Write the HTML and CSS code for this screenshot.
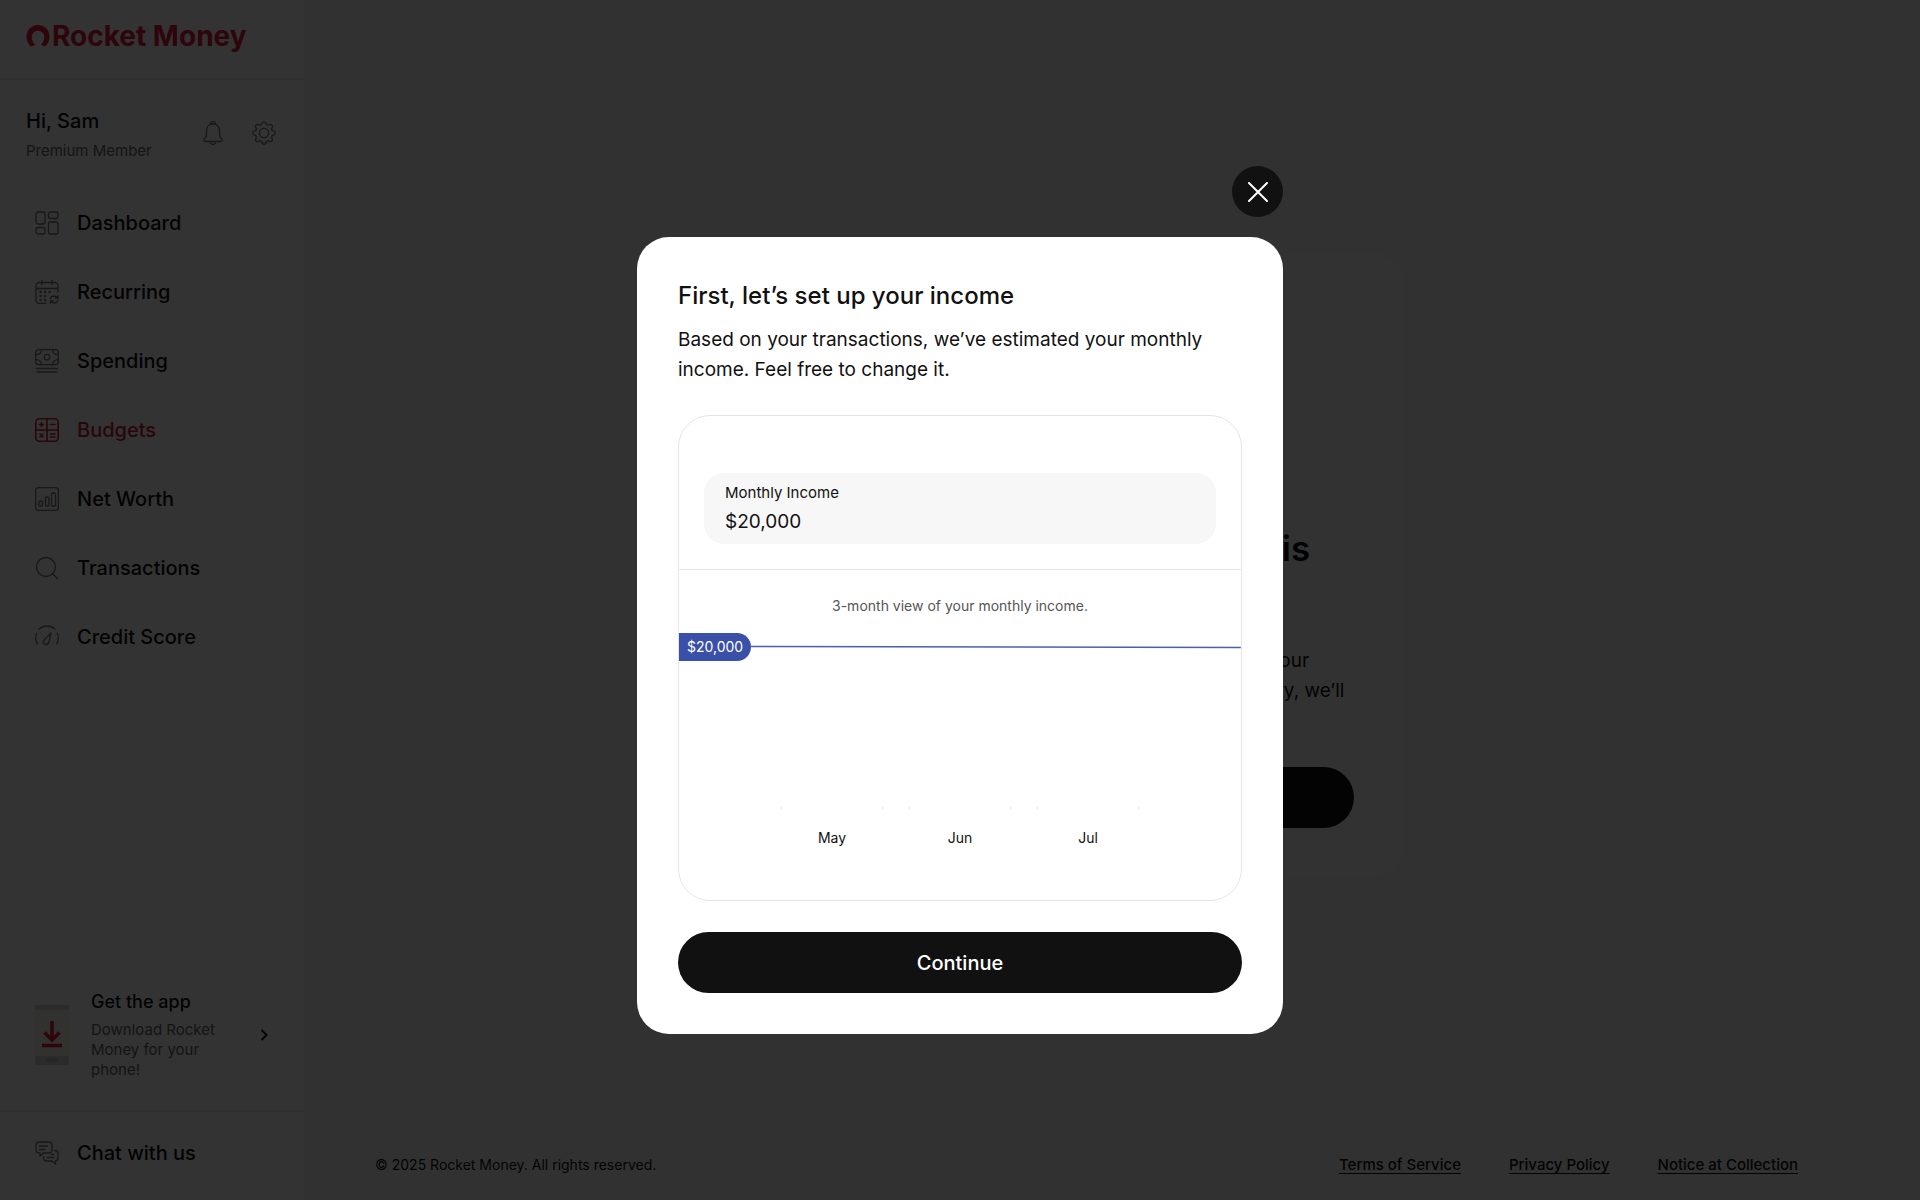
FILE: index.html
```html
<!DOCTYPE html>
<html lang="en">
<head>
<meta charset="utf-8">
<meta name="viewport" content="width=device-width, initial-scale=1">
<title>Rocket Money</title>
<link rel="stylesheet" href="styles.css">
</head>
<body>
<div class="app">
  <aside class="sidebar">
    <div class="brand">
      <svg class="brand-mark" viewBox="0 0 24 24" aria-hidden="true"><path d="M5 22.500C1.800 20.500 0 16.500 0 12a12 12 0 0 1 24 0c0 4.500-1.800 8.500-5 10.500l-4-2c2.600-2.200 3.500-5.200 3.500-8a6.500 6.500 0 0 0-13 0c0 2.800 1.200 5.600 3.500 8z"/></svg>
      <span class="brand-name">Rocket Money</span>
    </div>
    <div class="profile">
      <div class="profile-text">
        <p class="greeting">Hi, Sam</p>
        <p class="member">Premium Member</p>
      </div>
      <button class="icon-button" type="button" aria-label="Notifications">
        <svg class="icon" viewBox="0 0 24 24"><path d="M9.500 3.500v-.8a2.500 2 0 0 1 5 0v.8M12 3c-4 0-6.500 2.800-6.500 6.500v4c0 2-1 3-2.200 4.300-.9 1.200-.3 2.700 1.200 2.700h15c1.500 0 2.100-1.500 1.200-2.700-1.200-1.300-2.200-2.300-2.200-4.300v-4C18.500 5.800 16 3 12 3zM9.500 20.500v.7a2.500 2.300 0 0 0 5 0v-.7"/></svg>
      </button>
      <button class="icon-button" type="button" aria-label="Settings">
        <svg class="icon" viewBox="0 0 24 24"><circle cx="12" cy="12" r="4.600"/><path d="M12 .7c1.500 0 1.800 1 2.200 2.200.4 1.100 1.300 1.400 2.400.9 1.200-.6 2.200-.9 3.200.1s.7 2 .1 3.200c-.5 1.100-.2 2 .9 2.500 1.200.5 2.500.8 2.500 2.400s-1.300 1.900-2.500 2.400c-1.100.5-1.400 1.400-.9 2.500.6 1.200.9 2.200-.1 3.200s-2 .7-3.200.1c-1.100-.5-2-.2-2.400.9-.4 1.200-.7 2.200-2.200 2.200s-1.800-1-2.200-2.200c-.4-1.100-1.300-1.400-2.400-.9-1.200.6-2.200.9-3.200-.1s-.7-2-.1-3.200c.5-1.100.2-2-.9-2.500C2 13.900.7 13.600.7 12S2 10.100 3.200 9.600c1.100-.5 1.400-1.400.9-2.500-.6-1.200-.9-2.200.1-3.200s2-.7 3.200-.1c1.100.5 2 .2 2.400-.9C10.200 1.700 10.500.7 12 .7z"/></svg>
      </button>
    </div>
    <nav class="nav">
      <a class="nav-item" href="#dashboard">
        <svg class="icon" viewBox="0 0 24 24"><rect x="1" y="1" width="9" height="12" rx="2"/><rect x="13.500" y="1" width="9.500" height="6.500" rx="2"/><rect x="1" y="16.500" width="9" height="6.500" rx="2"/><rect x="13.500" y="11" width="9.500" height="12" rx="2"/></svg>
        <span>Dashboard</span>
      </a>
      <a class="nav-item" href="#recurring">
        <svg class="icon" viewBox="0 0 24 24"><path d="M23 12V6a3.500 3.500 0 0 0-3.500-3.500h-15A3.500 3.500 0 0 0 1 6v14a3.500 3.500 0 0 0 3.500 3.500H11M1 8.500h22M7 .5v4M17 .5v4"/><path class="dots" d="M5.500 12h.1M10 12h.1M14.500 12h.1M5.500 16h.1M10 16h.1M5.500 20h.1M10 20h.1"/><path d="M15.500 18.500c.5-1.800 2-2.500 3.600-2.500 1.500 0 2.600.6 3.400 2M23 15.500v2.700h-2.700M23 20.500c-.7 1.700-2 2.500-3.700 2.500-1.600 0-2.700-.7-3.500-2M15.500 23.500V21h2.700"/></svg>
        <span>Recurring</span>
      </a>
      <a class="nav-item" href="#spending">
        <svg class="icon" viewBox="0 0 24 24"><rect x=".7" y=".7" width="22.600" height="15" rx="3"/><circle cx="12" cy="8.200" r="2.800"/><path d="M6.500.7c0 3-2 5-5.800 5M17.500.7c0 3 2 5 5.800 5M6.500 15.700c0-3-2-5-5.800-5M17.500 15.700c0-3 2-5 5.800-5M1.500 19.500h21M2 23h20"/></svg>
        <span>Spending</span>
      </a>
      <a class="nav-item nav-item-active" href="#budgets" aria-current="page">
        <svg class="icon" viewBox="0 0 24 24"><rect x=".8" y=".8" width="22.400" height="22.400" rx="3.500"/><path d="M12 .8v22.400M.8 12h22.400M4.500 6.500h4M6.500 4.500v4M15.500 6.500h4.500M5 16l3 3M8 16l-3 3M15.500 16h4.500M15.500 19h4.500"/></svg>
        <span>Budgets</span>
      </a>
      <a class="nav-item" href="#net-worth">
        <svg class="icon" viewBox="0 0 24 24"><rect x=".7" y=".7" width="22.600" height="22.600" rx="2.500"/><rect x="4" y="14" width="3.500" height="5" rx="1"/><rect x="10.500" y="10" width="3.500" height="9" rx="1"/><rect x="16.500" y="6" width="4" height="13" rx="1"/></svg>
        <span>Net Worth</span>
      </a>
      <a class="nav-item" href="#transactions">
        <svg class="icon" viewBox="0 0 24 24"><circle cx="11" cy="11" r="9.500"/><path d="M18 18l4.500 4.500"/></svg>
        <span>Transactions</span>
      </a>
      <a class="nav-item" href="#credit-score">
        <svg class="icon" viewBox="0 0 24 24"><path d="M4 4c4.500-4 11.500-4 16 0M2.200 19c-2-4-2-7.500-.4-11M21.800 19c2-4 2-7.500.4-11M16 8l-6.500 6.500c-2 2.500-1 5 1 5s3.200-1.200 3.700-3.500z"/></svg>
        <span>Credit Score</span>
      </a>
    </nav>
    <a class="get-app" href="#get-the-app">
      <svg class="phone" viewBox="0 0 34 60" aria-hidden="true"><path class="phone-screen" d="M0 2h34v56H0z"/><path class="phone-edge" d="M0 0h34v5H0zM0 51h34v9H0z"/><path class="phone-key" d="M11 53h12v4H11z"/><path class="phone-arrow" d="M17 16v18M9.500 27.500L17 35l7.500-7.500M7 40.500h20"/></svg>
      <span class="get-app-text">
        <strong class="get-app-title">Get the app</strong>
        <span class="get-app-note">Download Rocket Money for your phone!</span>
      </span>
      <svg class="chevron" viewBox="0 0 8 12" aria-hidden="true"><path d="M1.500 1l5 5-5 5"/></svg>
    </a>
    <a class="chat" href="#chat">
      <svg class="icon" viewBox="0 0 24 24"><path d="M4 1h10a3 3 0 0 1 3 3v5a3 3 0 0 1-3 3H8.500L5 15v-3H4a3 3 0 0 1-3-3V4a3 3 0 0 1 3-3zM4.500 5h8M4.500 8.500h5M19.500 9.500h.5a3 3 0 0 1 3 3v4.500a3 3 0 0 1-2.500 3v3.200L17 20h-5.500a3 3 0 0 1-3-3v-1.500M12 16.500h7M16.500 13.500h2.500"/></svg>
      <span>Chat with us</span>
    </a>
  </aside>

  <main class="main">
    <section class="intro">
      <div class="intro-card">
        <h1 class="intro-title">Creating your budget is<br>easy</h1>
        <p class="intro-copy">To get started, let’s first look over all of your<br>income. Based on your latest spending history, we’ll<br>do the rest.</p>
        <button class="pill" type="button">Get Started</button>
      </div>
    </section>
    <footer class="footer">
      <p class="copyright">© 2025 Rocket Money. All rights reserved.</p>
      <a href="#terms">Terms of Service</a>
      <a href="#privacy">Privacy Policy</a>
      <a href="#notice">Notice at Collection</a>
    </footer>
  </main>
</div>

<div class="overlay">
  <div class="dialog-stack" role="dialog" aria-modal="true" aria-labelledby="dialog-title">
    <button class="close" type="button" aria-label="Close">
      <svg viewBox="0 0 20 20"><path d="M1 1l18 18M19 1L1 19"/></svg>
    </button>
    <div class="dialog">
      <h2 class="dialog-title" id="dialog-title">First, let’s set up your income</h2>
      <p class="dialog-copy">Based on your transactions, we’ve estimated your monthly income. Feel free to change it.</p>
      <div class="panel">
        <div class="field-row">
          <label class="field">
            <span class="field-label">Monthly Income</span>
            <input class="field-input" type="text" value="$20,000">
          </label>
        </div>
        <p class="chart-note">3-month view of your monthly income.</p>
        <div class="marker">
          <span class="marker-value">$20,000</span>
          <svg class="marker-line" viewBox="0 0 490 4" preserveAspectRatio="none" aria-hidden="true"><path d="M0 1.500L490 2.500"/></svg>
        </div>
        <div class="chart">
          <div class="month"><span class="bar"></span><span>May</span></div>
          <div class="month"><span class="bar"></span><span>Jun</span></div>
          <div class="month"><span class="bar"></span><span>Jul</span></div>
        </div>
      </div>
      <button class="pill" type="button">Continue</button>
    </div>
  </div>
</div>
</body>
</html>
```

FILE: styles.css
```css
* { box-sizing: border-box; }

body {
  margin: 0;
  font-family: Inter, "Liberation Sans", sans-serif;
  font-size: 20px;
  line-height: 30px;
  color: #111;
}

h1, h2, p { margin: 0; }
a { color: inherit; text-decoration: none; }
button, input { font: inherit; color: inherit; border: 0; padding: 0; background: none; }

.app { display: flex; min-height: 100vh; background: #f5f5f5; }

/* Sidebar */
.sidebar {
  display: flex;
  flex-direction: column;
  flex: none;
  width: 304px;
  background: #fff;
}
.brand {
  display: flex;
  align-items: center;
  gap: 2px;
  height: 80px;
  padding: 0 26px 6px;
  border-bottom: 2px solid #e6e6e6;
  color: #de1c38;
}
.brand-mark { width: 24px; height: 23px; flex: none; fill: currentColor; }
.brand-name { font-size: 28px; font-weight: 700; white-space: nowrap; }

.icon {
  width: 24px;
  height: 24px;
  flex: none;
  fill: none;
  stroke: #777;
  stroke-width: 1.3;
  stroke-linecap: round;
  stroke-linejoin: round;
}
.icon .dots { stroke-width: 2.4; }

.profile { display: flex; align-items: center; gap: 27px; padding: 26px 28px 24px 26px; }
.profile-text { flex: 1; }
.greeting { font-weight: 500; }
.member { color: #666; font-size: 15px; }
.icon-button { display: flex; margin-bottom: 6px; }

.nav { padding-top: 3px; }
.nav-item {
  display: flex;
  align-items: center;
  gap: 18px;
  margin-bottom: 9px;
  padding: 15px 35px;
  font-weight: 500;
}
.nav-item-active { color: #c81e32; }
.nav-item-active .icon { stroke: currentColor; stroke-width: 1.6; }

.get-app {
  display: flex;
  align-items: center;
  margin-top: auto;
  padding: 0 36px 30px 35px;
  border-bottom: 2px solid #ebebeb;
}
.phone { width: 34px; height: 60px; flex: none; margin-right: 22px; }
.phone-screen { fill: #f2f2ee; }
.phone-edge { fill: #d6d6d6; }
.phone-key { fill: #bdbdbd; }
.phone-arrow { fill: none; stroke: #de1c38; stroke-width: 3.5; }
.get-app-text { flex: 1; }
.get-app-title { display: block; font-size: 18px; font-weight: 500; line-height: 24px; margin-bottom: 6px; }
.get-app-note { display: block; width: 140px; color: #666; font-size: 15px; line-height: 20px; }
.chevron { width: 8px; height: 12px; fill: none; stroke: #111; stroke-width: 2; }
.chat { display: flex; align-items: center; gap: 18px; padding: 26px 35px 32px; font-weight: 500; }

/* Page behind the dialog */
.main { display: flex; flex-direction: column; flex: 1; min-width: 0; }
.intro { display: flex; flex: 1; align-items: center; justify-content: center; padding-bottom: 20px; }
.intro-card {
  width: 582px;
  padding: 270px 49px 50px;
  border-radius: 32px;
  background: #fbfbfb;
  text-align: center;
}
.intro-title { font-size: 35px; font-weight: 600; line-height: 50px; margin-bottom: 23px; }
.intro-copy { margin-bottom: 31px; font-size: 19px; }

.footer {
  display: flex;
  gap: 48px;
  padding: 0 122px 20px 71px;
  font-size: 15px;
}
.footer a { font-weight: 500; text-decoration: underline; text-underline-offset: 3px; }
.copyright { flex: 1; font-size: 14px; }

.pill {
  display: block;
  width: 100%;
  height: 61px;
  border-radius: 31px;
  background: #111;
  color: #fff;
  font-weight: 500;
}
.intro .pill { color: #111; }

/* Dialog */
.overlay {
  position: fixed;
  inset: 0;
  display: flex;
  align-items: center;
  justify-content: center;
  background: rgba(0, 0, 0, .8);
}
.dialog-stack {
  display: flex;
  flex-direction: column;
  align-items: flex-end;
  gap: 20px;
  width: 646px;
  max-width: 100%;
}
.close {
  display: flex;
  align-items: center;
  justify-content: center;
  width: 51px;
  height: 51px;
  border-radius: 50%;
  background: #111;
}
.close svg { width: 20px; height: 20px; fill: none; stroke: #fff; stroke-width: 2; stroke-linecap: round; }
.dialog {
  width: 100%;
  padding: 41px;
  border-radius: 32px;
  background: #fff;
}
.dialog-title { font-size: 24px; font-weight: 500; line-height: 36px; margin-bottom: 11px; }
.dialog-copy { margin-bottom: 30px; font-size: 19px; }
.panel { margin-bottom: 31px; border: 1px solid #e6e6e6; border-radius: 32px; }
.field-row { padding: 57px 25px 25px; border-bottom: 1px solid #e6e6e6; }
.field {
  display: block;
  padding: 10px 21px;
  border-radius: 20px;
  background: #f7f7f7;
}
.field-label { display: block; font-size: 15px; line-height: 20px; }
.field-input { display: block; width: 100%; height: 31px; padding-top: 6px; font-size: 19px; }
.chart-note { padding: 21px 0 12px; color: #555; font-size: 14px; text-align: center; }
.marker { display: flex; align-items: center; }
.marker-value {
  padding: 0 8px;
  border-radius: 0 14px 14px 0;
  background: #3a50a8;
  color: #fff;
  font-size: 14px;
  line-height: 28px;
}
.marker-line { flex: 1; min-width: 0; height: 4px; fill: none; stroke: #4a5fae; stroke-width: 1.5; }
.chart {
  display: flex;
  justify-content: center;
  gap: 26px;
  padding: 146px 0 47px;
  font-size: 14px;
  text-align: center;
}
.month { width: 102px; }
.bar {
  display: block;
  height: 2px;
  margin-bottom: 14px;
  border: solid #ddd;
  border-width: 0 1px;
}
```
